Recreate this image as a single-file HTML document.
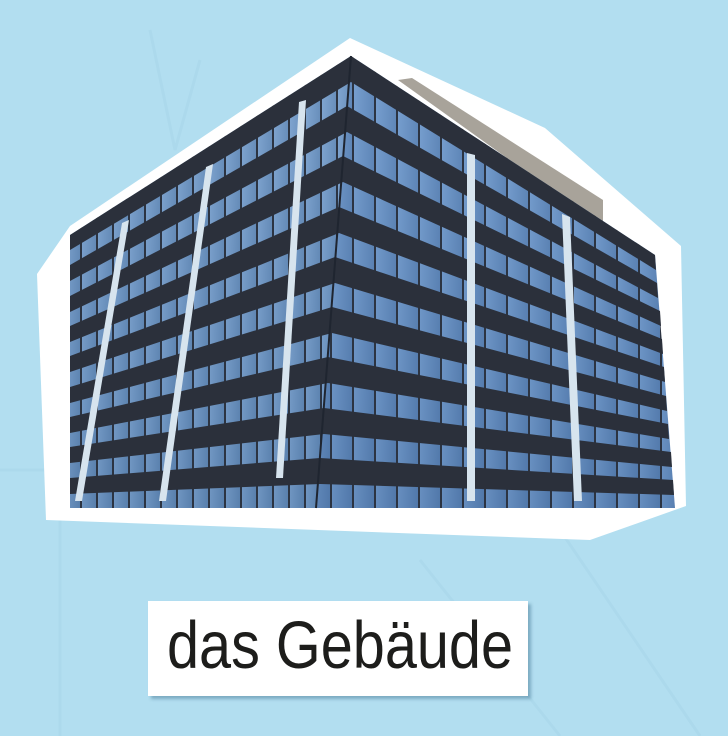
<!DOCTYPE html>
<html><head><meta charset="utf-8"><style>
html,body{margin:0;padding:0}
body{width:728px;height:736px;background:#b2def0;position:relative;overflow:hidden;font-family:"Liberation Sans",sans-serif}
#lab{position:absolute;left:148px;top:601px;width:380px;height:95px;background:#fff;box-shadow:3px 3px 3px rgba(60,110,140,.45)}
#lab span{position:absolute;left:19px;top:6px;font-size:67px;color:#1d1d1b;white-space:nowrap;transform:scaleX(.86);transform-origin:0 0}
</style></head><body>
<svg width="728" height="736" style="position:absolute;left:0;top:0">
<defs>
<linearGradient id="gl" x1="0" y1="0" x2="1" y2="1"><stop offset="0" stop-color="#86abd6"/><stop offset="1" stop-color="#557ca9"/></linearGradient>
<linearGradient id="gr" x1="0" y1="0" x2="1" y2="1"><stop offset="0" stop-color="#7ca4d4"/><stop offset="1" stop-color="#4d74a6"/></linearGradient>
<pattern id="wl" width="16" height="600" patternUnits="userSpaceOnUse"><rect width="16" height="600" fill="url(#gl)"/><rect width="2" height="600" fill="#2c3442"/></pattern>
<pattern id="wr" width="22" height="600" patternUnits="userSpaceOnUse"><rect width="22" height="600" fill="url(#gr)"/><rect width="2" height="600" fill="#2c3442"/></pattern>
</defs>
<g stroke="#a9d6ea" stroke-width="3" fill="none" opacity=".6">
<path d="M150 30 L175 150 L200 60"/><path d="M560 530 L700 736"/><path d="M420 560 L560 736"/><path d="M0 470 L60 470 L60 736"/>
</g>
<polygon points="350,38 545,128 681,246 686,506 590,540 46,520 37,274 70,226" fill="#fff"/>
<polygon points="398,80 412,78 603,200 603,222 560,196" fill="#a8a39a"/>
<polygon points="351,56 70,235 70,508 316,508" fill="url(#wl)"/>
<polygon points="351,56 655,255 675,508 316,508" fill="url(#wr)"/>
<g fill="#2b303b">
<polygon points="351,56 70,235 70,250 351,82"/>
<polygon points="347,106 70,265 70,281 347,132"/>
<polygon points="343,156 70,296 70,312 343,182"/>
<polygon points="339,207 70,326 70,342 339,233"/>
<polygon points="335,257 70,356 70,372 335,283"/>
<polygon points="332,307 70,387 70,403 332,333"/>
<polygon points="328,357 70,417 70,433 328,383"/>
<polygon points="324,408 70,447 70,463 324,434"/>
<polygon points="320,458 70,478 70,494 320,484"/>
<polygon points="351,56 655,255 656,270 351,82"/>
<polygon points="347,106 657,283 658,298 347,132"/>
<polygon points="343,156 660,311 661,326 343,182"/>
<polygon points="339,207 662,339 663,354 339,233"/>
<polygon points="335,257 664,367 665,382 335,283"/>
<polygon points="332,307 666,396 667,411 332,333"/>
<polygon points="328,357 668,424 669,439 328,383"/>
<polygon points="324,408 671,452 672,467 324,434"/>
<polygon points="320,458 673,480 674,495 320,484"/>
</g>
<g fill="#d7e4ee">
<polygon points="299,102 306,100 283,478 276,478"/>
<polygon points="206,167 213,164 166,501 159,501"/>
<polygon points="122,223 129,220 82,501 75,501"/>
<polygon points="467,153 475,155 475,501 467,501"/>
<polygon points="562,214 570,217 582,501 574,501"/>
</g>
<line x1="351" y1="56" x2="316" y2="508" stroke="#1f2530" stroke-width="2"/>
</svg>
<div id="lab"><span>das Gebäude</span></div>
</body></html>
